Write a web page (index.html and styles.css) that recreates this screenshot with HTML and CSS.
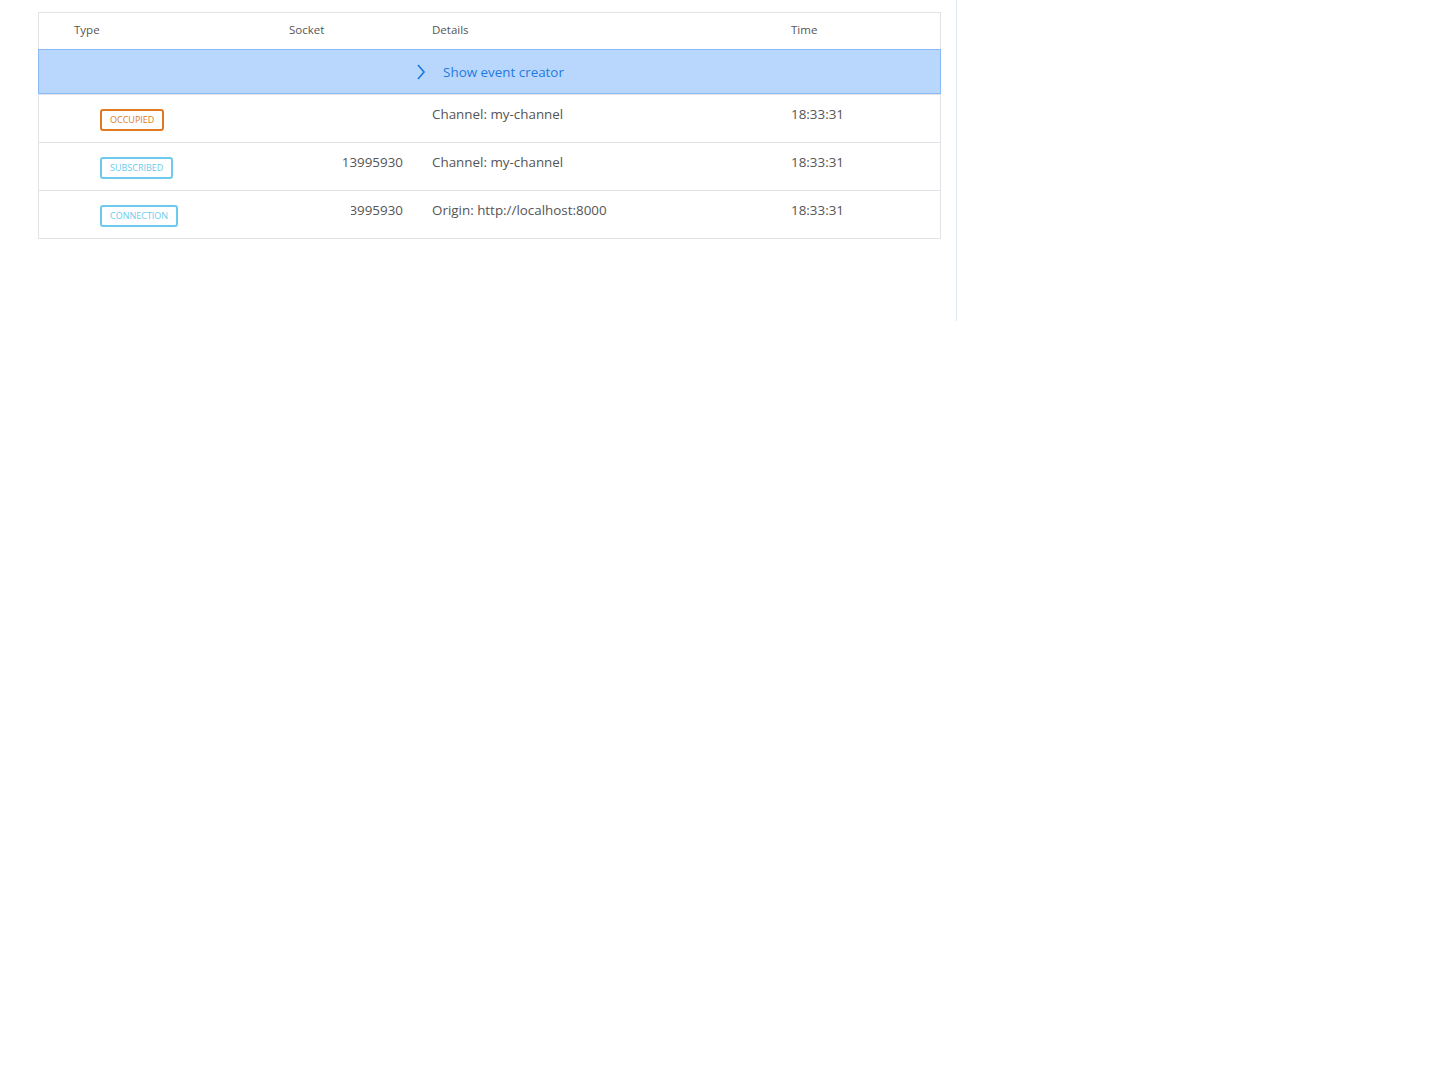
FILE: index.html
```html
<!DOCTYPE html>
<html lang="en">
<head>
  <meta charset="UTF-8" />
  <title>Debug console</title>
  <link rel="stylesheet" href="styles.css">
</head>
<body>
  <div class="main">
    <div class="events">
      <div class="row head">
        <div class="cell type">Type</div>
        <div class="cell socket">Socket</div>
        <div class="cell">Details</div>
        <div class="cell">Time</div>
      </div>

      <div class="creator">
        <svg class="chevron" width="12" height="16" viewBox="0 0 12 16">
          <path d="M3 1 L9 8 L3 15" fill="none" stroke="#1f7ae0" stroke-width="1.7"/>
        </svg>
        <span>Show event creator</span>
      </div>

      <div class="row">
        <div class="cell type"><span class="badge occupied">Occupied</span></div>
        <div class="cell socket"></div>
        <div class="cell">Channel: my-channel</div>
        <div class="cell">18:33:31</div>
      </div>

      <div class="row">
        <div class="cell type"><span class="badge info">Subscribed</span></div>
        <div class="cell socket"><span class="sid wide">13995930</span></div>
        <div class="cell">Channel: my-channel</div>
        <div class="cell">18:33:31</div>
      </div>

      <div class="row last">
        <div class="cell type"><span class="badge info">Connection</span></div>
        <div class="cell socket"><span class="sid narrow">13995930</span></div>
        <div class="cell">Origin: http://localhost:8000</div>
        <div class="cell">18:33:31</div>
      </div>
    </div>
  </div>
</body>
</html>
```

FILE: styles.css
```css
body {
  font-family: "Open Sans", sans-serif;
  background: white;
  color: #555;
  margin: 0;
  padding: 0;
}

.main {
  width: 903px;
  height: 309px;
  padding: 12px 15px 0 38px;
  border-right: 1px solid #dce9f5;
}

.events {
  border: 1px solid #e1e3e6;
}

.row {
  display: grid;
  grid-template-columns: 250px 143px 359px 1fr;
  height: 47px;
  border-top: 1px solid #e1e3e6;
  font-size: 13.4px;
  line-height: 16px;
}

.row.head {
  height: 36px;
  border-top: none;
  font-size: 11.5px;
  align-items: center;
  padding-bottom: 2px;
  box-sizing: border-box;
}

.cell {
  padding-top: 11px;
  white-space: nowrap;
}

.head .cell {
  padding-top: 0;
}

.type {
  padding-left: 35px;
}

.socket {
  display: flex;
  justify-content: flex-end;
  padding-right: 29px;
}

.head .socket {
  justify-content: flex-start;
}

.sid {
  display: flex;
  justify-content: flex-end;
  overflow: hidden;
}

.sid.wide { width: 60px; }
.sid.narrow { width: 52px; }

.creator {
  height: 43px;
  background: #b9d7fd;
  border: 1px solid #8bbbf6;
  margin: 0 -1px;
  display: flex;
  align-items: center;
  justify-content: center;
  color: #1f7ae0;
  font-size: 13.4px;
}

.chevron {
  margin-right: 16px;
}

.badge {
  display: inline-block;
  margin-left: 26px;
  margin-top: 3px;
  padding: 0 8px;
  height: 18px;
  line-height: 18px;
  border: 2px solid;
  border-radius: 3px;
  font-size: 9px;
  text-transform: uppercase;
}

.badge.occupied {
  color: #e07a22;
  border-color: #e07a22;
}

.badge.info {
  color: #6ccbec;
  border-color: #6ccbec;
}
```
